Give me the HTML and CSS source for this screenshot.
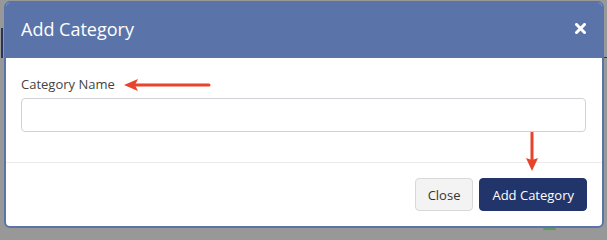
FILE: index.html
```html
<!DOCTYPE html>
<html>
<head>
<meta charset="utf-8">
<link rel="stylesheet" href="styles.css">
</head>
<body>
<div class="backdrop">
  <div class="under-bar"></div>
  <div class="under-line"></div>
  <div class="under-green"></div>
  <div class="modal">
    <div class="modal-header">
      <h4 class="modal-title">Add Category</h4>
      <button class="close" aria-label="Close">
        <svg width="11" height="11" viewBox="0 0 11 11"><path d="M1.5 1.5 L9.5 9.5 M9.5 1.5 L1.5 9.5" stroke="#fff" stroke-width="3" stroke-linecap="square"/></svg>
      </button>
    </div>
    <div class="modal-body">
      <label class="label">Category Name</label>
      <input class="form-control" type="text">
    </div>
    <div class="modal-footer">
      <button class="btn btn-default">Close</button>
      <button class="btn btn-primary">Add Category</button>
    </div>
    <svg class="arrow arrow-left" width="90" height="14" viewBox="0 0 90 14"><path d="M12 7 H85" stroke="#e8432b" stroke-width="3" stroke-linecap="round"/><path d="M0 7 L14 1 L11 7 L14 13 Z" fill="#e8432b"/></svg>
    <svg class="arrow arrow-down" width="14" height="40" viewBox="0 0 14 40"><path d="M7 1 V28" stroke="#e8432b" stroke-width="3" stroke-linecap="round"/><path d="M7 39 L1 26 L7 28 L13 26 Z" fill="#e8432b"/></svg>
  </div>
</div>
</body>
</html>
```

FILE: styles.css
```css
html, body {
  margin: 0;
  padding: 0;
}
body {
  background: #989898;
  font-family: "Open Sans", "Liberation Sans", sans-serif;
  width: 607px;
  height: 230px;
  overflow: hidden;
}
.backdrop {
  position: relative;
  width: 607px;
  height: 230px;
  padding: 1px 0 0 4px;
  box-sizing: border-box;
}
.under-bar {
  position: absolute;
  left: 1px;
  top: 28px;
  width: 2px;
  height: 30px;
  background: #2a3358;
}
.under-line {
  position: absolute;
  left: 604px;
  top: 57px;
  width: 3px;
  height: 1px;
  background: #2a3358;
}
.under-green {
  position: absolute;
  left: 543px;
  top: 228px;
  width: 13px;
  height: 2px;
  background: #5d9a5a;
  border-radius: 3px 3px 0 0;
}
.modal {
  position: relative;
  width: 600px;
  height: 227px;
  box-sizing: border-box;
  border: 2px solid #5a74aa;
  border-radius: 6px;
  background: #fff;
  overflow: hidden;
  display: flex;
  flex-direction: column;
}
.modal-header {
  background: #5a74aa;
  margin: -2px -2px 0 -2px;
  padding: 15px 17px 16px 17px;
  display: flex;
  align-items: center;
  justify-content: space-between;
}
.modal-title {
  margin: 0;
  font-size: 18px;
  font-weight: 400;
  line-height: 26px;
  color: #fff;
}
.close {
  border: 0;
  background: none;
  padding: 0;
  margin: 0 1px 1px 0;
  width: 11px;
  height: 11px;
  display: flex;
}
.modal-body {
  padding: 17px 15px 30px 15px;
  display: flex;
  flex-direction: column;
}
.label {
  font-size: 13px;
  line-height: 18px;
  color: #444;
  margin-bottom: 5px;
}
.form-control {
  height: 34px;
  box-sizing: border-box;
  border: 1px solid #cfd2d8;
  border-radius: 4px;
  width: 565px;
  margin: 0;
  background: #fff;
}
.modal-footer {
  border-top: 1px solid #ececec;
  padding: 15px 15px;
  display: flex;
  justify-content: flex-end;
  gap: 6px;
}
.btn {
  font-family: "Open Sans", "Liberation Sans", sans-serif;
  font-size: 13px;
  line-height: 18px;
  height: 33px;
  padding: 6px 12px;
  border-radius: 4px;
  box-sizing: border-box;
  margin: 0;
}
.btn-default {
  background: #f3f3f3;
  color: #333;
  border: 1px solid #d8d8d8;
}
.btn-primary {
  background: #22356b;
  color: #fff;
  border: 1px solid #22356b;
}
.arrow {
  position: absolute;
}
.arrow-left {
  left: 118px;
  top: 75px;
}
.arrow-down {
  left: 519px;
  top: 129px;
}
```
